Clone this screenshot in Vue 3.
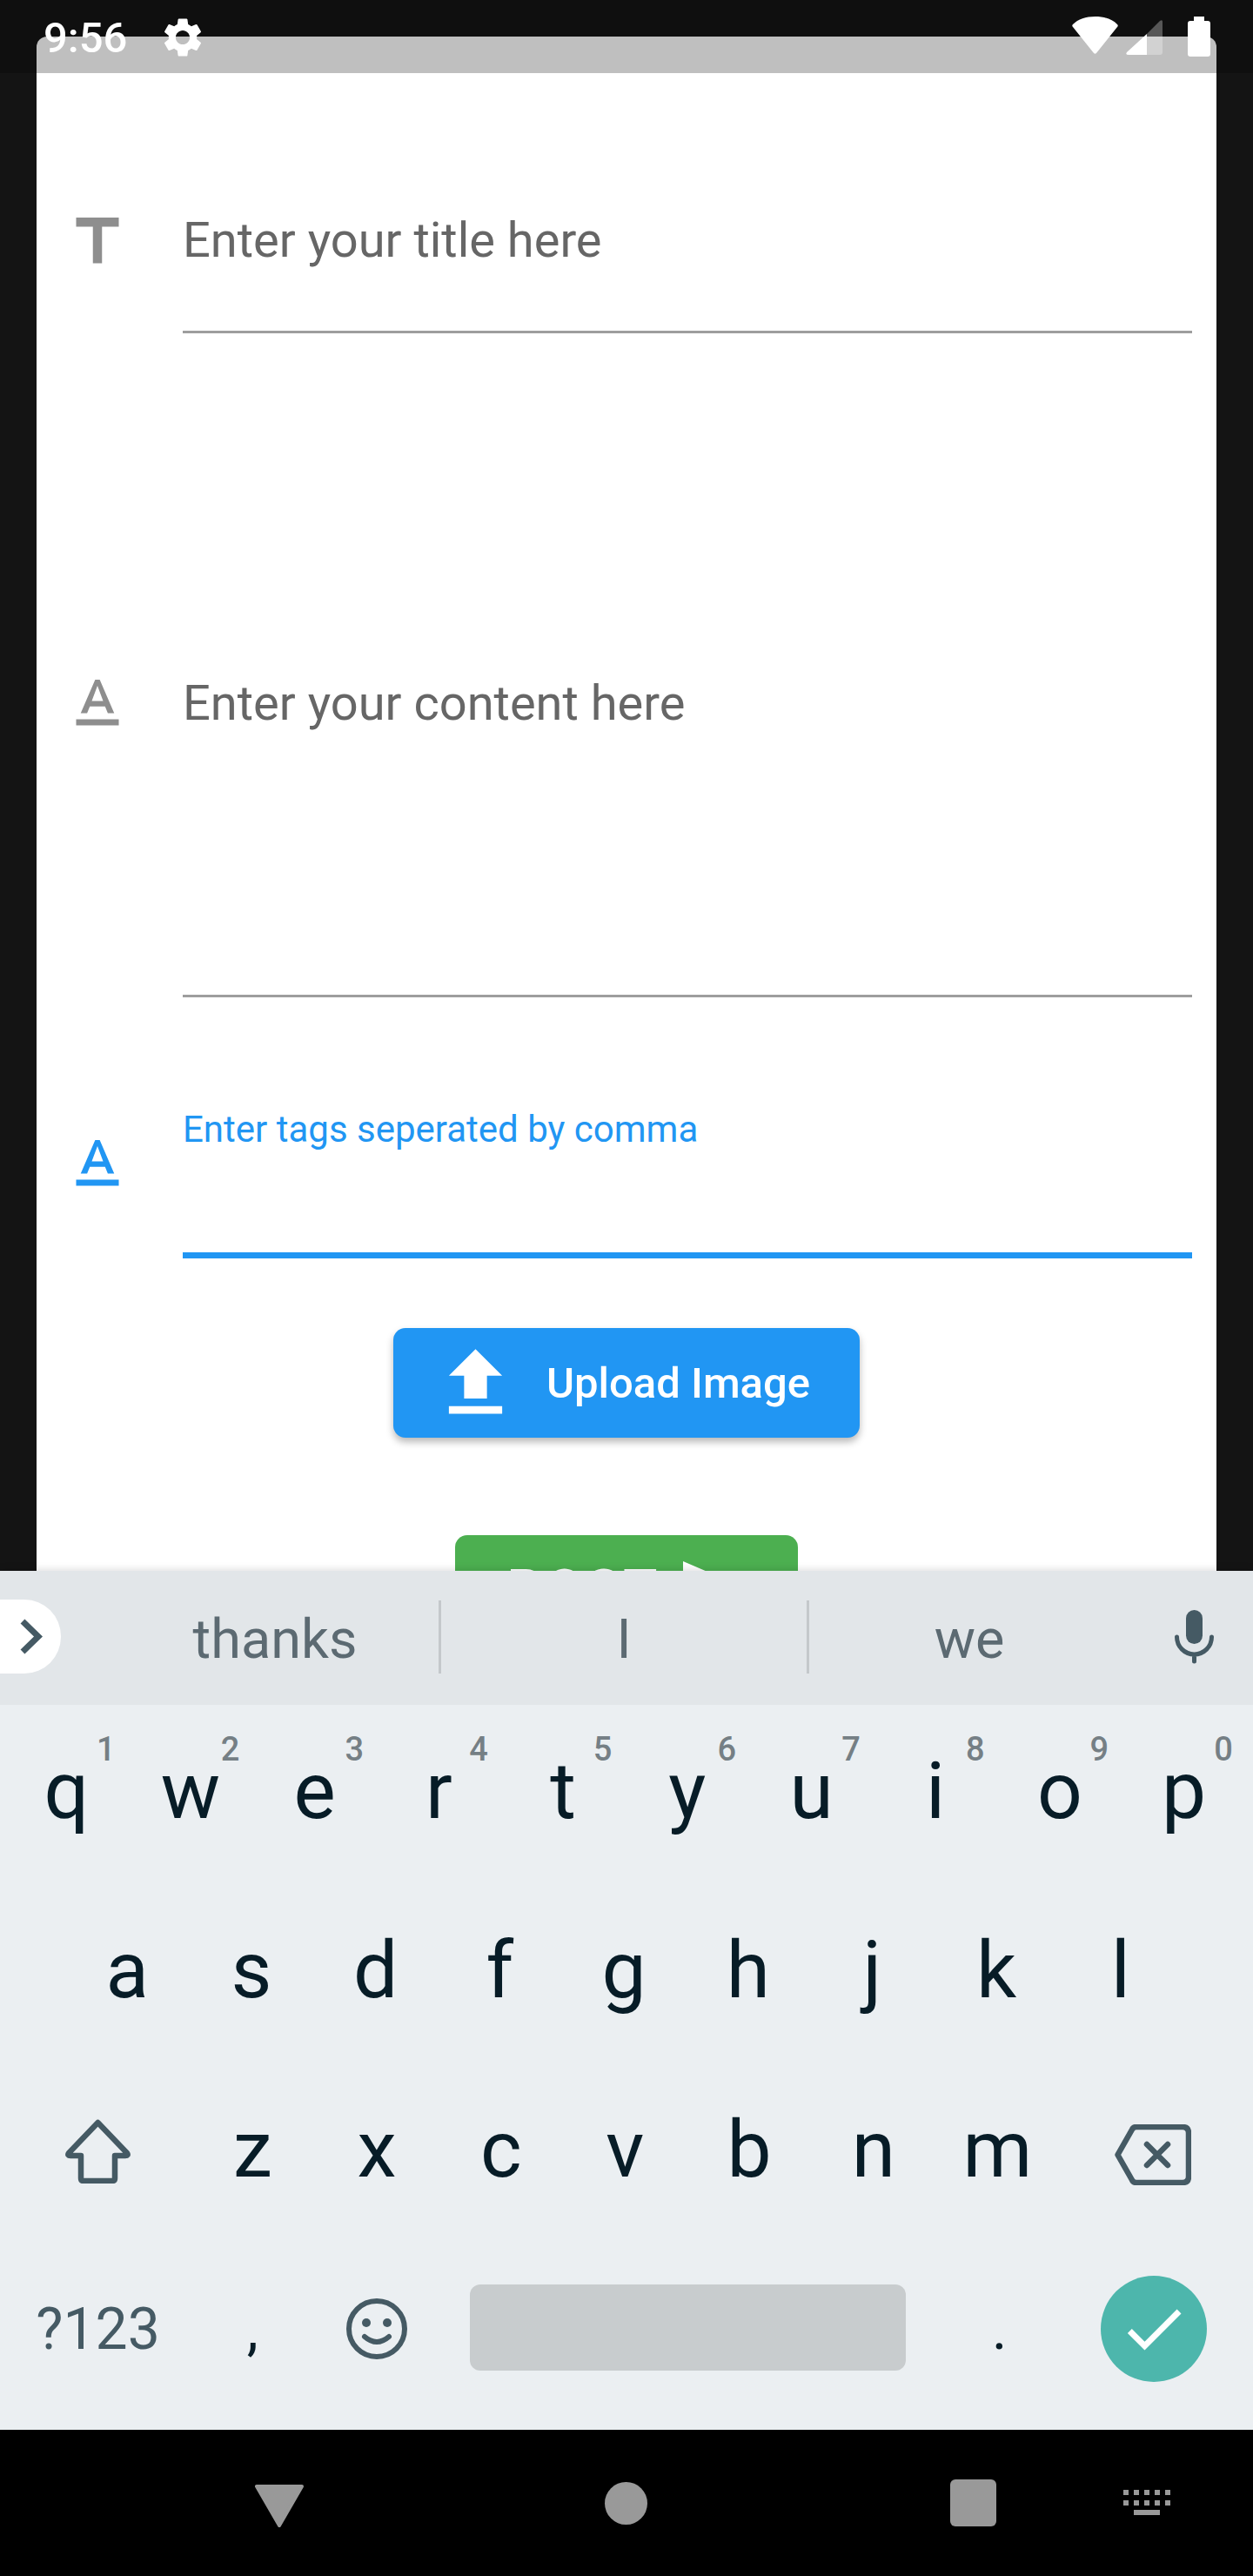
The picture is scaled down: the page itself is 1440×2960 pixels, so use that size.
<template>
  <div class="screen">
    <div class="app-area">
      <div class="status-bar">
        <div class="status-left">
          <span class="clock">9:56</span>
          <svg class="gear" viewBox="0 0 24 24"><path fill="#fff" d="M19.14 12.94c.04-.3.06-.61.06-.94 0-.32-.02-.64-.07-.94l2.03-1.58c.18-.14.23-.41.12-.61l-1.92-3.32c-.12-.22-.37-.29-.59-.22l-2.39.96c-.5-.38-1.03-.7-1.62-.94l-.36-2.54c-.04-.24-.24-.41-.48-.41h-3.84c-.24 0-.43.17-.47.41l-.36 2.54c-.59.24-1.13.57-1.62.94l-2.39-.96c-.22-.08-.47 0-.59.22L2.74 8.87c-.12.21-.08.47.12.61l2.03 1.58c-.05.3-.09.63-.09.94s.02.64.07.94l-2.03 1.58c-.18.14-.23.41-.12.61l1.92 3.32c.12.22.37.29.59.22l2.39-.96c.5.38 1.03.7 1.62.94l.36 2.54c.05.24.24.41.48.41h3.84c.24 0 .44-.17.47-.41l.36-2.54c.59-.24 1.13-.56 1.62-.94l2.39.96c.22.08.47 0 .59-.22l1.92-3.32c.12-.22.07-.47-.12-.61l-2.01-1.58zM12 15.6c-1.98 0-3.6-1.62-3.6-3.6s1.62-3.6 3.6-3.6 3.6 1.62 3.6 3.6-1.62 3.6-3.6 3.6z"/></svg>
        </div>
        <div class="status-right">
          <svg class="wifi" viewBox="0 0 53 43"><path fill="#fff" d="M26.5 0C37 0 46 3 52 9q1.500 1.500 0 3L28 42q-1.500 1.500-3 0L1 12q-1.500-1.500 0-3C7 3 16 0 26.500 0z"/></svg>
          <svg class="signal" viewBox="0 0 42 41">
            <path fill="#fff" fill-opacity=".3" d="M24 17L39 2q3-2 3 1v35q0 3-3 3H24z"/>
            <path fill="#fff" d="M1 38L24 17v24H3q-4 0-2-3z"/>
          </svg>
          <svg class="battery" viewBox="0 0 26 46"><path fill="#fff" d="M7 0h12v5h4q3 0 3 3v35q0 3-3 3H3q-3 0-3-3V8q0-3 3-3h4z"/></svg>
        </div>
      </div>

      <div class="card">
        <div class="field field-title">
          <svg class="field-icon" viewBox="0 0 24 24"><path d="M5 4v3h5.500v12h3V7H19V4z"/></svg>
          <div class="field-box title-box"><span class="placeholder">Enter your title here</span></div>
        </div>
        <div class="field field-content">
          <svg class="field-icon" viewBox="0 0 24 24"><path :d="textFormat"/></svg>
          <div class="field-box content-box"><span class="placeholder">Enter your content here</span></div>
        </div>
        <div class="field field-tags">
          <svg class="field-icon" viewBox="0 0 24 24"><path :d="textFormat"/></svg>
          <div class="field-box tags-box"><span class="floating">Enter tags seperated by comma</span></div>
        </div>

        <button class="upload-btn">
          <svg viewBox="0 0 24 24"><path fill="#fff" d="M9 16h6v-6h4l-7-7-7 7h4zm-4 2h14v2H5z"/></svg>
          <span>Upload Image</span>
        </button>

        <button class="post-btn">
          <span>POST</span>
          <svg viewBox="0 0 70 60"><path fill="#fff" d="M0 0l70 30-70 30z"/></svg>
        </button>
      </div>
    </div>

    <div class="keyboard">
      <div class="suggestions">
        <div class="expand">
          <svg viewBox="0 0 26 41"><path fill="none" stroke="#455a64" stroke-width="7" d="M3 3l18 17.500L3 38"/></svg>
        </div>
        <span class="word word-first">thanks</span>
        <i class="divider"></i>
        <span class="word word-mid">I</span>
        <i class="divider"></i>
        <span class="word word-last">we</span>
        <svg class="mic" viewBox="0 0 45 62">
          <rect x="13" y="0" width="19" height="39" rx="9.500" fill="#455a64"/>
          <path fill="none" stroke="#455a64" stroke-width="5" stroke-linecap="round" d="M2.500 31a20 20 0 0 0 40 0M22.500 52v7"/>
        </svg>
      </div>

      <div class="keys">
        <div class="key-row row-top">
          <div v-for="(k, i) in topRow" :key="k" class="key">
            {{ k }}<span class="hint">{{ (i + 1) % 10 }}</span>
          </div>
        </div>
        <div class="key-row row-home">
          <div v-for="k in homeRow" :key="k" class="key">{{ k }}</div>
        </div>
        <div class="key-row">
          <div class="key-wide">
            <svg class="shift" viewBox="0 0 78 75"><path fill="none" stroke="#455a64" stroke-width="6.500" stroke-linejoin="round" d="M39.500 5L73 40q2 3-2 3H59v26q0 3-3 3H23q-3 0-3-3V43H8q-4 0-2-3z"/></svg>
          </div>
          <div v-for="k in bottomRow" :key="k" class="key">{{ k }}</div>
          <div class="key-back">
            <svg class="backspace" viewBox="0 0 88 70">
              <path fill="none" stroke="#455a64" stroke-width="6.500" stroke-linejoin="round" d="M3.500 35L20 6q1.500-3 5-3h53q7 0 7 7v50q0 7-7 7H25q-3.500 0-5-3z"/>
              <path fill="none" stroke="#455a64" stroke-width="6.500" stroke-linecap="round" d="M37 23l24 24M61 23L37 47"/>
            </svg>
          </div>
        </div>
        <div class="key-row row-action">
          <div class="key-wide sym">?123</div>
          <div class="key punct">,</div>
          <div class="key">
            <svg class="smile" viewBox="0 0 70 70">
              <circle cx="35" cy="35" r="32" fill="none" stroke="#455a64" stroke-width="6"/>
              <circle cx="23" cy="28" r="5" fill="#455a64"/>
              <circle cx="47" cy="28" r="5" fill="#455a64"/>
              <path fill="none" stroke="#455a64" stroke-width="6" stroke-linecap="round" d="M21 44q14 12 28 0"/>
            </svg>
          </div>
          <div class="space-wrap"><div class="space-bar"></div></div>
          <div class="key punct">.</div>
          <div class="key-enter">
            <div class="enter-circle">
              <svg viewBox="0 0 24 24"><path fill="#fff" d="M9 16.200L4.800 12l-1.400 1.400L9 19 21 7l-1.400-1.400L9 16.200z"/></svg>
            </div>
          </div>
        </div>
      </div>
    </div>

    <div class="nav-bar">
      <svg class="nav-back" viewBox="0 0 56 49"><path fill="#999" stroke="#999" stroke-width="4" stroke-linejoin="round" d="M2 2h52L28 47z"/></svg>
      <div class="nav-home"></div>
      <div class="nav-recent"></div>
      <svg class="nav-kbd" viewBox="0 0 54 30">
        <g fill="#999">
          <rect v-for="x in kbdDots" :key="'a' + x" :x="x" y="0" width="6" height="6"/>
          <rect v-for="x in kbdDots" :key="'b' + x" :x="x" y="12" width="6" height="6"/>
          <rect x="12" y="23" width="30" height="6"/>
        </g>
      </svg>
    </div>
  </div>
</template>

<script setup>
const textFormat = 'M5 17v2h14v-2H5zm4.500-4.200h5l.9 2.200h2.100L12.750 4h-1.500L6.500 15h2.100l.9-2.200zM12 5.980L13.870 11h-3.740L12 5.980z'

const topRow = ['q', 'w', 'e', 'r', 't', 'y', 'u', 'i', 'o', 'p']
const homeRow = ['a', 's', 'd', 'f', 'g', 'h', 'j', 'k', 'l']
const bottomRow = ['z', 'x', 'c', 'v', 'b', 'n', 'm']
const kbdDots = [0, 12, 24, 36, 48]
</script>

<style>
html,
body {
  margin: 0;
  background: #000;
}
</style>

<style scoped>
.screen {
  width: 1440px;
  height: 2960px;
  display: flex;
  flex-direction: column;
  font-family: Roboto, "Liberation Sans", sans-serif;
  overflow: hidden;
}

/* app area, cut off by the keyboard */
.app-area {
  position: relative;
  height: 1805px;
  padding: 42px 42px 0;
  box-sizing: border-box;
  background: #141414;
  overflow: hidden;
}

.status-bar {
  position: absolute;
  top: 0;
  left: 0;
  right: 0;
  height: 84px;
  background: rgba(0, 0, 0, 0.25);
  display: flex;
  justify-content: space-between;
  z-index: 2;
}

.status-left {
  display: flex;
  padding-left: 50px;
}

.clock {
  color: #fff;
  font-size: 49px;
  font-weight: 500;
  line-height: 88px;
}

.gear {
  width: 54px;
  height: 54px;
  margin: 16px 0 0 37px;
}

.status-right {
  display: flex;
  padding-right: 51px;
}

.wifi {
  width: 53px;
  height: 43px;
  margin-top: 19px;
}

.signal {
  width: 42px;
  height: 41px;
  margin: 22px 0 0 9px;
}

.battery {
  width: 26px;
  height: 46px;
  margin: 19px -2px 0 29px;
}

.card {
  height: 1800px;
  background: #fff;
  border-radius: 12px 12px 0 0;
  padding: 194px 28px 0;
  box-sizing: border-box;
}

.field {
  display: flex;
  gap: 56px;
}

.field-icon {
  width: 84px;
  height: 84px;
  flex: none;
  fill: #8e8e8e;
}

.field-box {
  flex: 1;
  border-bottom: 3px solid #9e9e9e;
  box-sizing: border-box;
}

.placeholder {
  display: block;
  font-size: 56px;
  line-height: 66px;
  color: #666;
}

.title-box {
  height: 147px;
}

.title-box .placeholder {
  padding-top: 7px;
}

.field-content {
  margin-top: 384px;
}

.content-box {
  height: 379px;
}

.content-box .placeholder {
  padding-top: 8px;
}

.field-tags {
  margin-top: 124px;
}

.field-tags .field-icon {
  fill: #2196f3;
  margin-top: 26px;
}

.tags-box {
  height: 176px;
  padding-top: 3px;
  border-bottom: 7px solid #2196f3;
}

.floating {
  display: block;
  color: #2196f3;
  font-size: 42px;
  line-height: 49px;
}

.upload-btn {
  display: flex;
  align-items: center;
  gap: 29px;
  height: 126px;
  margin: 80px auto 0;
  padding: 0 57px 0 42px;
  border: 0;
  border-radius: 14px;
  background: #2196f3;
  color: #fff;
  font-family: inherit;
  font-size: 49px;
  font-weight: 500;
  box-shadow: 0 5px 8px rgba(0, 0, 0, 0.28);
}

.upload-btn svg {
  width: 105px;
  height: 105px;
}

.post-btn {
  display: flex;
  align-items: flex-start;
  gap: 26px;
  width: 394px;
  height: 126px;
  margin: 112px auto 0;
  padding: 26px 0 0 60px;
  border: 0;
  border-radius: 14px;
  background: #4caf50;
  color: #fff;
  font-family: inherit;
  font-size: 63px;
  font-weight: 700;
  line-height: 74px;
  letter-spacing: 3.5px;
}

.post-btn svg {
  width: 70px;
  height: 60px;
  margin-top: 4px;
}

/* keyboard */
.keyboard {
  position: relative;
  box-shadow: 0 -2px 8px rgba(0, 0, 0, 0.12);
  background: #ebeff2;
}

.suggestions {
  height: 154px;
  background: #e2e6e9;
  display: flex;
  align-items: center;
}

.expand {
  width: 70px;
  height: 85px;
  margin: -3px 0 0;
  background: #fff;
  border-radius: 0 42px 42px 0;
  display: flex;
  align-items: center;
  padding-left: 23px;
  box-sizing: border-box;
}

.expand svg {
  width: 26px;
  height: 41px;
}

.word {
  font-size: 63px;
  color: #5c6a72;
  text-align: center;
  line-height: 154px;
  margin-top: 4px;
  box-sizing: border-box;
}

.word-first {
  width: 434px;
  padding-left: 58px;
}

.word-mid {
  width: 420px;
}

.word-last {
  width: 368px;
}

.divider {
  width: 3px;
  height: 84px;
  margin-top: -3px;
  background: #c4c8cb;
}

.mic {
  width: 45px;
  height: 62px;
  margin-left: 52px;
  margin-top: -2px;
}

.keys {
  height: 833px;
}

.key-row {
  height: 206px;
  display: flex;
  padding-bottom: 8px;
  box-sizing: border-box;
}

.row-top {
  padding-left: 5px;
}

.row-home {
  padding-left: 75px;
}

.key {
  position: relative;
  width: 142.7px;
  flex: none;
  display: flex;
  align-items: center;
  justify-content: center;
  font-size: 91px;
  color: #071c27;
}

.hint {
  position: absolute;
  right: 15px;
  top: 29px;
  font-size: 38px;
  font-weight: 500;
  line-height: 44px;
  color: #757f85;
}

.key-wide {
  width: 219px;
  flex: none;
  display: flex;
  align-items: center;
  justify-content: center;
}

.key-back {
  flex: 1;
  display: flex;
  align-items: center;
  justify-content: center;
  padding-right: 8px;
}

.shift {
  width: 78px;
  height: 75px;
  margin: 2px 0 0 4px;
}

.backspace {
  width: 88px;
  height: 70px;
  margin-top: 12px;
}

.sym {
  font-size: 66px;
  color: #455a64;
  padding-left: 6px;
  box-sizing: border-box;
}

.punct {
  font-size: 66px;
}

.smile {
  width: 70px;
  height: 70px;
}

.space-wrap {
  width: 573px;
  flex: none;
  padding: 0 36px;
  box-sizing: border-box;
  display: flex;
  align-items: center;
}

.space-bar {
  width: 100%;
  height: 99px;
  margin-top: -4px;
  background: #c8ccce;
  border-radius: 12px;
}

.key-enter {
  flex: 1;
  display: flex;
  align-items: center;
  justify-content: center;
  padding-right: 8px;
}

.enter-circle {
  width: 122px;
  height: 122px;
  border-radius: 50%;
  background: #4db6ac;
  display: flex;
  align-items: center;
  justify-content: center;
}

.enter-circle svg {
  width: 84px;
  height: 84px;
}

/* android nav */
.nav-bar {
  flex: 1;
  background: #000;
  display: flex;
  align-items: center;
  padding-left: 293px;
}

.nav-back {
  width: 56px;
  height: 49px;
  margin-top: 7px;
}

.nav-home {
  width: 49px;
  height: 49px;
  border-radius: 50%;
  background: #999;
  margin-left: 346px;
}

.nav-recent {
  width: 53px;
  height: 54px;
  border-radius: 6px;
  background: #999;
  margin-left: 348px;
}

.nav-kbd {
  width: 54px;
  height: 30px;
  margin-left: 146px;
}
</style>
